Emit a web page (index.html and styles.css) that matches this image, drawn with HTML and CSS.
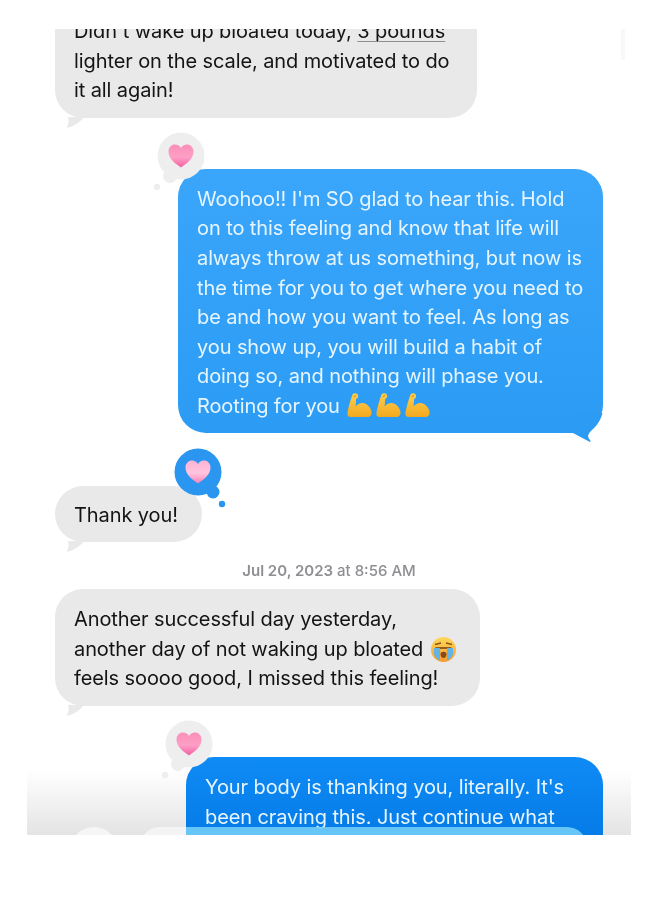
FILE: index.html
```html
<!DOCTYPE html>
<html lang="en">
<head>
  <meta charset="UTF-8" />
  <meta name="viewport" content="width=device-width, initial-scale=1.0"/>
  <title>Messages</title>
  <link rel="stylesheet" href="styles.css">
</head>
<body>
  <svg class="defs" width="0" height="0" aria-hidden="true">
    <defs>
      <linearGradient id="heartPink" x1="0" y1="0" x2="0" y2="1">
        <stop offset="0" stop-color="#fb8fb8"/>
        <stop offset="0.55" stop-color="#fd9fc6"/>
        <stop offset="1" stop-color="#f35fa2"/>
      </linearGradient>
      <linearGradient id="heartLight" x1="0" y1="0" x2="0" y2="1">
        <stop offset="0" stop-color="#fdb4d4"/>
        <stop offset="0.55" stop-color="#ffc4de"/>
        <stop offset="1" stop-color="#f782b8"/>
      </linearGradient>
      <linearGradient id="gold" x1="0" y1="0" x2="0" y2="1">
        <stop offset="0" stop-color="#ffcf4d"/>
        <stop offset="1" stop-color="#f3a91f"/>
      </linearGradient>
      <linearGradient id="faceYellow" x1="0" y1="0" x2="0" y2="1">
        <stop offset="0" stop-color="#ffd95c"/>
        <stop offset="1" stop-color="#f59a2c"/>
      </linearGradient>
      <symbol id="heart" viewBox="0 0 26 24">
        <path d="M13 23.500C8 20 .5 15 .5 7.500.5 3.200 3.600.5 7 .5c2.700 0 4.800 1.400 6 3.600C14.200 1.900 16.300.5 19 .5c3.400 0 6.500 2.700 6.500 7 0 7.500-7.500 12.500-12.500 16z"/>
      </symbol>
      <symbol id="muscle" viewBox="0 0 26 26">
        <path d="M6 1.500C8 0 11 .5 11.500 3 12 5 10.500 6.500 9.500 6.500L9 14.500C11 12 14 10.500 17 11 21 11.700 25 16 25.500 20.500 25.800 23.500 24 25.500 21 25.500L4 25.500C1.500 25.500 0 24 .5 21 1.500 15 3.500 8 6 1.500z" fill="url(#gold)"/>
        <path d="M7 4.500l2.500-1.500" stroke="#c9821a" stroke-width="1" fill="none"/>
      </symbol>
    </defs>
  </svg>

  <main class="thread">
    <span class="scrollbar"></span>

    <div class="msg first">
      <div class="bubble in">
        <p>Didn't wake up bloated today, <span class="link">3 pounds</span> lighter on the scale, and motivated to do it all again!</p>
        <svg class="tail tail-in" width="24" height="12" viewBox="0 0 24 12"><path d="M2 0C3 4 3 7 1 9.500.5 10.500 1 11 2 10.500 8 9 12 7 18 0z"/></svg>
      </div>
    </div>

    <div class="msg out-row long">
      <div class="bubble out">
        <svg class="reaction grey-react" width="56" height="62" viewBox="0 0 56 62">
          <circle cx="28" cy="24" r="23.500"/><circle cx="17" cy="44" r="7"/><circle cx="4" cy="55" r="3.200"/>
          <use href="#heart" x="15" y="12" width="26" height="24" fill="url(#heartPink)"/>
        </svg>
        <p>Woohoo!! I'm SO glad to hear this. Hold on to this feeling and know that life will always throw at us something, but now is the time for you to get where you need to be and how you want to feel. As long as you show up, you will build a habit of doing so, and nothing will phase you. Rooting for you <span class="emojis"><svg class="emoji" width="25" height="26" role="img" aria-label="flexed biceps"><use href="#muscle"/></svg><svg class="emoji" width="25" height="26" role="img" aria-label="flexed biceps"><use href="#muscle"/></svg><svg class="emoji" width="25" height="26" role="img" aria-label="flexed biceps"><use href="#muscle"/></svg></span></p>
        <svg class="tail tail-out" width="36" height="30" viewBox="0 0 36 30"><path d="M4 20 20 28.500C21.500 29.500 22 28.500 21 27 18 23.500 19 21 22 18 26 14 31 10 33.500 0L10 0z"/></svg>
      </div>
    </div>

    <div class="msg thanks">
      <div class="bubble in short">
        <p>Thank you!</p>
        <svg class="tail tail-in" width="24" height="12" viewBox="0 0 24 12"><path d="M2 0C3 4 3 7 1 9.500.5 10.500 1 11 2 10.500 8 9 12 7 18 0z"/></svg>
        <svg class="reaction blue-react" width="56" height="62" viewBox="0 0 56 62">
          <circle cx="28" cy="24" r="23.500"/><circle cx="43" cy="44" r="6.500"/><circle cx="52" cy="56" r="3.200"/>
          <use href="#heart" x="15" y="12" width="26" height="24" fill="url(#heartLight)"/>
        </svg>
      </div>
    </div>

    <div class="stamp"><b>Jul 20, 2023</b> at 8:56 AM</div>

    <div class="msg">
      <div class="bubble in mid">
        <p>Another successful day yesterday, another day of not waking up bloated <svg class="emoji cry" width="25" height="25" viewBox="0 0 25 25" role="img" aria-label="crying face"><circle cx="12.500" cy="12.500" r="12.500" fill="url(#faceYellow)"/><path d="M4 7.500 10 6M21 7.500 15 6" stroke="#8a5a12" stroke-width="1.400" fill="none"/><path d="M4.500 11h16" stroke="#7a4a10" stroke-width="1.600"/><path d="M9.500 17c0-3 6-3 6 0 0 2-1 4-3 4s-3-2-3-4z" fill="#8a4a14"/><path d="M3 11h6v12.500C6.500 22.500 4 20 3 17zM16 11h6v6c-1 3-3.500 5.500-6 6.500z" fill="#63b4e6"/></svg> feels soooo good, I missed this feeling!</p>
        <svg class="tail tail-in" width="24" height="12" viewBox="0 0 24 12"><path d="M2 0C3 4 3 7 1 9.500.5 10.500 1 11 2 10.500 8 9 12 7 18 0z"/></svg>
      </div>
    </div>

    <div class="msg out-row reply">
      <div class="bubble out dark">
        <svg class="reaction grey-react" width="56" height="62" viewBox="0 0 56 62">
          <circle cx="28" cy="24" r="23.500"/><circle cx="17" cy="44" r="7"/><circle cx="4" cy="55" r="3.200"/>
          <use href="#heart" x="15" y="12" width="26" height="24" fill="url(#heartPink)"/>
        </svg>
        <p>Your body is thanking you, literally. It's been craving this. Just continue what you're doing and you'll feel great</p>
      </div>
    </div>

    <div class="composer">
      <span class="plus"></span>
      <span class="input"></span>
    </div>
  </main>
</body>
</html>
```

FILE: styles.css
```css
* {
  margin: 0;
  padding: 0;
  box-sizing: border-box;
}

body {
  background: #fff;
  font-family: Inter, 'Liberation Sans', sans-serif;
}

.defs {
  position: absolute;
}

.thread {
  position: relative;
  width: 604px;
  height: 806px;
  margin: 29px 0 0 27px;
  overflow: hidden;
  padding: 0 28px;
  background: linear-gradient(rgba(230, 230, 230, 0), #e4e4e4) bottom / 100% 65px no-repeat;
  filter: blur(0.35px);
}

.scrollbar {
  position: absolute;
  top: 0;
  right: 6px;
  width: 4px;
  height: 31px;
  background: #f8f8f8;
}

.msg {
  display: flex;
  margin-top: 51px;
}

.msg.first {
  margin-top: -27px;
}

.msg.out-row {
  justify-content: flex-end;
}

.msg.thanks {
  margin-top: 53px;
}

.bubble {
  position: relative;
  padding: 15px 19px 12px;
  border-radius: 28px;
  font-size: 20px;
  line-height: 29.6px;
  letter-spacing: -0.1px;
}

.bubble p {
  position: relative;
}

.in {
  width: 422px;
  background: #e9e9e9;
  color: #141416;
}

.in.short {
  width: 147px;
}

.in.mid {
  width: 425px;
  padding-top: 16px;
}

.out {
  width: 425px;
  padding-top: 16px;
  padding-bottom: 11px;
  background: linear-gradient(#3aa6fb, #2b9bf4);
  color: #e6f5ff;
}

.out.dark {
  width: 417px;
  background: linear-gradient(#0f8bf6, #0074e0);
}

.link {
  text-decoration: underline;
  text-decoration-color: #8e8e93;
  text-underline-offset: 3px;
  text-decoration-thickness: 1px;
}

.tail {
  position: absolute;
  display: block;
}

.tail-in {
  left: 11px;
  bottom: -11px;
  fill: #e9e9e9;
}

.tail-out {
  right: -2px;
  bottom: -10px;
  fill: #2b9bf4;
}

.reaction {
  position: absolute;
  left: -25px;
  top: -37px;
}

.grey-react {
  fill: #eeeeee;
}

.blue-react {
  left: 115px;
  top: -38px;
  fill: #2b96f0;
}

.emoji {
  vertical-align: -6px;
}

.cry {
  margin-left: 2px;
}

.emojis {
  display: inline-flex;
  gap: 4px;
  vertical-align: -5px;
  margin-left: 2px;
}

.stamp {
  margin-top: 19px;
  text-align: center;
  font-size: 15px;
  line-height: 20px;
  color: #8e8e93;
  font-weight: 500;
}

.stamp b {
  font-weight: 600;
}

.stamp + .msg {
  margin-top: 8px;
}

.composer {
  position: absolute;
  left: 0;
  right: 0;
  bottom: 0;
  height: 65px;
}

.plus {
  position: absolute;
  left: 43px;
  top: 57px;
  width: 48px;
  height: 48px;
  border-radius: 50%;
  background: #f6f6f6;
}

.input {
  position: absolute;
  left: 113px;
  top: 57px;
  width: 447px;
  height: 40px;
  border-radius: 20px;
  background: linear-gradient(90deg, #f4f4f4 46px, rgba(120, 210, 250, 0.85) 46px);
}
```
